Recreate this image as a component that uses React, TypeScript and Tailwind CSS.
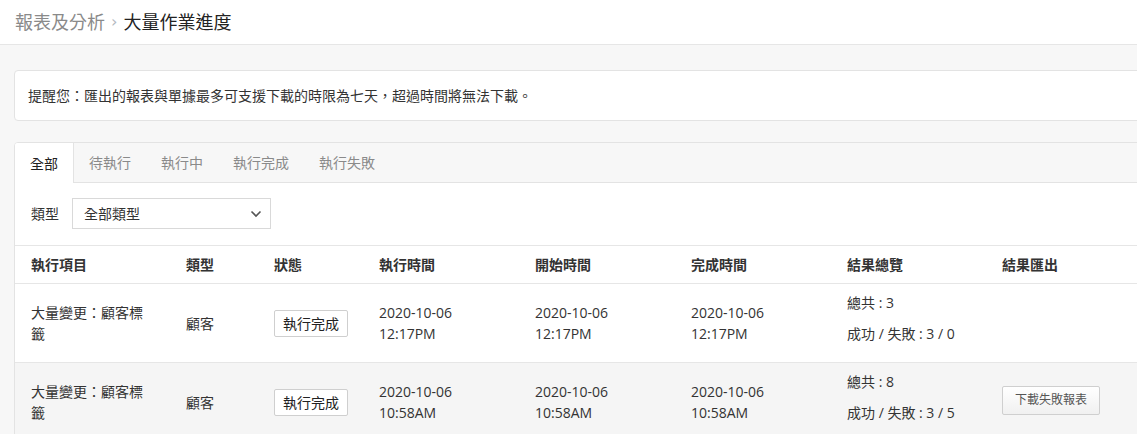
import React from "react";

const cols = "grid grid-cols-[155px_88px_105px_156px_156px_156px_155px_1fr]";

type Row = {
  date: string;
  time: string;
  total: number;
  ok: number;
  fail: number;
  download: boolean;
  bg: string;
};

const rows: Row[] = [
  { date: "2020-10-06", time: "12:17PM", total: 3, ok: 3, fail: 0, download: false, bg: "bg-white" },
  { date: "2020-10-06", time: "10:58AM", total: 8, ok: 3, fail: 5, download: true, bg: "bg-[#f5f5f5]" },
];

function DateCell({ date, time }: { date: string; time: string }) {
  return (
    <div className="px-4 flex flex-col justify-center leading-[21px]">
      <div>{date}</div>
      <div>{time}</div>
    </div>
  );
}

export default function App() {
  return (
    <div className="w-[1137px] h-[434px] overflow-hidden bg-[#f7f7f7] text-[#333] font-['Open_Sans','Noto_Sans_CJK_TC',sans-serif]">
      <header className="h-[45px] bg-white border-b border-[#e6e6e6] flex items-center pl-[15px] text-[18px] leading-none">
        <span className="text-[#8a8a8a]">報表及分析</span>
        <span className="text-[#b5b9c2] ml-[6px] mr-[6px] text-[16px] font-['DejaVu_Sans',sans-serif]">›</span>
        <span className="text-[#222]">大量作業進度</span>
      </header>

      <div className="pl-[14px] w-[1160px]">
        <div className="mt-[25px] h-[51px] bg-white border border-[#e3e3e3] rounded-[4px] flex items-center pl-[13px] text-[14px] text-[#333]">
          提醒您：匯出的報表與單據最多可支援下載的時限為七天，超過時間將無法下載。
        </div>

        <div className="mt-[21px] bg-white border border-[#e3e3e3] rounded-[4px] overflow-hidden text-[14px]">
          <div className="flex h-[40px] bg-[#f7f7f7]">
            <div className="px-[15px] bg-white border-r border-[#e3e3e3] flex items-center text-[#222]">全部</div>
            {["待執行", "執行中", "執行完成", "執行失敗"].map((t) => (
              <div key={t} className="px-[15px] border-b border-[#e3e3e3] flex items-center text-[#8a8a8a]">
                {t}
              </div>
            ))}
            <div className="flex-1 border-b border-[#e3e3e3]" />
          </div>

          <div className="flex items-center pl-[16px] pt-[15px] pb-[16px]">
            <span className="text-[#333] mr-[13px]">類型</span>
            <div className="w-[199px] h-[31px] border border-[#d9d9d9] flex items-center justify-between pl-[11px] pr-[8px] bg-white">
              <span>全部類型</span>
              <svg width="12" height="8" viewBox="0 0 12 8" fill="none">
                <polyline points="1.5,1.5 6,6 10.5,1.5" stroke="#555" strokeWidth="1.6" />
              </svg>
            </div>
          </div>

          <div className={`${cols} h-[39px] border-t border-b border-[#e6e6e6] items-center font-semibold text-[#333]`}>
            {["執行項目", "類型", "狀態", "執行時間", "開始時間", "完成時間", "結果總覽", "結果匯出"].map((h) => (
              <div key={h} className="px-4">{h}</div>
            ))}
          </div>

          {rows.map((r, i) => (
            <div key={i} className={`${cols} h-[79px] border-b border-[#e6e6e6] ${r.bg}`}>
              <div className="px-4 flex items-center leading-[21px]">大量變更：顧客標籤</div>
              <div className="px-4 flex items-center">顧客</div>
              <div className="px-4 flex items-center">
                <span className="shrink-0 whitespace-nowrap h-[27px] px-[8px] border border-[#cfcfcf] rounded-[2px] bg-white flex items-center text-[#222]">執行完成</span>
              </div>
              <DateCell date={r.date} time={r.time} />
              <DateCell date={r.date} time={r.time} />
              <DateCell date={r.date} time={r.time} />
              <div className="px-4 flex flex-col justify-center leading-[21px]">
                <div className="mb-[10px] whitespace-nowrap">總共 : {r.total}</div>
                <div className="mb-[10px] whitespace-nowrap">成功 / 失敗 : {r.ok} / {r.fail}</div>
              </div>
              <div className="px-4 flex items-center">
                {r.download && (
                  <span className="whitespace-nowrap h-[29px] px-[12px] -mt-[4px] border border-[#cfcfcf] rounded-[2px] bg-gradient-to-b from-white to-[#f0f0f0] flex items-center text-[12px] text-[#555]">
                    下載失敗報表
                  </span>
                )}
              </div>
            </div>
          ))}
        </div>
      </div>
    </div>
  );
}
